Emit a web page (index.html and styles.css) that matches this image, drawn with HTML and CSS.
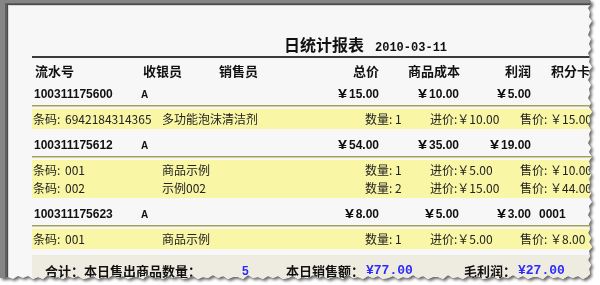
FILE: index.html
```html
<!DOCTYPE html>
<html lang="zh-CN">
<head>
<meta charset="utf-8">
<title>日统计报表</title>
<link rel="stylesheet" href="styles.css">
</head>
<body>
<div class="shot">
  <div class="paper">
    <div class="report">
      <div class="title"><span class="t-cn">日统计报表</span><span class="t-date">2010-03-11</span></div>
      <div class="rule"></div>

      <div class="row head">
        <span class="c1">流水号</span><span class="c2">收银员</span><span class="c3">销售员</span><span class="c4">总价</span><span class="c5">商品成本</span><span class="c6">利润</span><span class="c7">积分卡</span>
      </div>

      <div class="row main">
        <span class="c1">100311175600</span><span class="c2"><span class="who">A</span></span><span class="c3"></span><span class="c4"><span class="yen">¥</span>15.00</span><span class="c5"><span class="yen">¥</span>10.00</span><span class="c6"><span class="yen">¥</span>5.00</span><span class="c7"></span>
      </div>
      <div class="sep"></div>
      <div class="band">
        <div class="bl"><span><span class="lbl">条码:</span>6942184314365</span><span>多功能泡沫清洁剂</span><span>数量: 1</span><span>进价:￥10.00</span><span>售价: ￥15.00</span></div>
      </div>

      <div class="row main gap">
        <span class="c1">100311175612</span><span class="c2"><span class="who">A</span></span><span class="c3"></span><span class="c4"><span class="yen">¥</span>54.00</span><span class="c5"><span class="yen">¥</span>35.00</span><span class="c6"><span class="yen">¥</span>19.00</span><span class="c7"></span>
      </div>
      <div class="sep"></div>
      <div class="band">
        <div class="bl"><span><span class="lbl">条码:</span>001</span><span>商品示例</span><span>数量: 1</span><span>进价:￥5.00</span><span>售价: ￥10.00</span></div>
        <div class="bl"><span><span class="lbl">条码:</span>002</span><span>示例002</span><span>数量: 2</span><span>进价:￥15.00</span><span>售价: ￥44.00</span></div>
      </div>

      <div class="row main gap">
        <span class="c1">100311175623</span><span class="c2"><span class="who">A</span></span><span class="c3"></span><span class="c4"><span class="yen">¥</span>8.00</span><span class="c5"><span class="yen">¥</span>5.00</span><span class="c6"><span class="yen">¥</span>3.00</span><span class="c7">0001</span>
      </div>
      <div class="sep"></div>
      <div class="band">
        <div class="bl"><span><span class="lbl">条码:</span>001</span><span>商品示例</span><span>数量: 1</span><span>进价:￥5.00</span><span>售价: ￥8.00</span></div>
      </div>

      <div class="footer">
        <span class="f1">合计：本日售出商品数量：</span><span class="num">5</span><span>本日销售额：</span><span class="blue">¥77.00</span><span>毛利润：</span><span class="blue">¥27.00</span>
      </div>
    </div>
  </div>
</div>
</body>
</html>
```

FILE: styles.css
```css
html, body {
  margin: 0;
  padding: 0;
  background: #ffffff;
}

body {
  width: 600px;
  height: 285px;
  overflow: hidden;
}

.shot {
  width: 600px;
  height: 285px;
  filter: drop-shadow(2px 2px 1.5px rgba(0, 0, 0, 0.6));
}

.paper {
  width: 600px;
  height: 285px;
  box-sizing: border-box;
  overflow: hidden;
  background: #f7f7f7;
  padding: 34px 0 0 32px;
  box-shadow:
    inset 5px 3px 0 #858585,
    inset 7px 4px 0 #606060,
    inset 8px 5px 0 #4a4a4a,
    inset 9px 6px 0 #d8d8d8;
  clip-path: polygon(
    0 0, 590px 0, 591px 4px, 588px 8px, 590px 12px, 589px 17px, 592px 21px, 589px 26px, 590px 30px, 588px 35px,
    591px 39px, 589px 44px, 591px 49px, 588px 53px, 590px 58px, 589px 62px, 592px 67px, 589px 71px, 590px 76px,
    588px 80px, 591px 85px, 589px 89px, 590px 94px, 588px 98px, 591px 103px, 589px 107px, 592px 112px, 589px 116px,
    590px 121px, 588px 125px, 591px 130px, 589px 134px, 590px 139px, 588px 143px, 591px 148px, 589px 152px,
    592px 157px, 589px 161px, 590px 166px, 588px 170px, 591px 175px, 589px 179px, 590px 184px, 588px 188px,
    591px 193px, 589px 197px, 592px 202px, 589px 206px, 590px 211px, 588px 215px, 591px 220px, 589px 224px,
    590px 229px, 588px 233px, 591px 238px, 589px 242px, 592px 247px, 589px 251px, 590px 256px, 588px 260px,
    591px 265px, 589px 269px, 590px 274px, 587px 277px,
    583px 279px, 578px 276px, 573px 278px, 568px 276px, 563px 279px, 558px 277px, 553px 278px, 548px 275px, 543px 279px, 538px 277px,
    533px 277px, 528px 279px, 523px 276px, 518px 278px, 513px 275px, 508px 278px, 503px 277px, 498px 279px, 493px 276px, 488px 278px,
    483px 279px, 478px 276px, 473px 278px, 468px 276px, 463px 279px, 458px 277px, 453px 278px, 448px 275px, 443px 279px, 438px 277px,
    433px 277px, 428px 279px, 423px 276px, 418px 278px, 413px 275px, 408px 278px, 403px 277px, 398px 279px, 393px 276px, 388px 278px,
    383px 279px, 378px 276px, 373px 278px, 368px 276px, 363px 279px, 358px 277px, 353px 278px, 348px 275px, 343px 279px, 338px 277px,
    333px 277px, 328px 279px, 323px 276px, 318px 278px, 313px 275px, 308px 278px, 303px 277px, 298px 279px, 293px 276px, 288px 278px,
    283px 279px, 278px 276px, 273px 278px, 268px 276px, 263px 279px, 258px 277px, 253px 278px, 248px 275px, 243px 279px, 238px 277px,
    233px 277px, 228px 279px, 223px 276px, 218px 278px, 213px 275px, 208px 278px, 203px 277px, 198px 279px, 193px 276px, 188px 278px,
    183px 279px, 178px 276px, 173px 278px, 168px 276px, 163px 279px, 158px 277px, 153px 278px, 148px 275px, 143px 279px, 138px 277px,
    133px 277px, 128px 279px, 123px 276px, 118px 278px, 113px 275px, 108px 278px, 103px 277px, 98px 279px, 93px 276px, 88px 278px,
    83px 279px, 78px 276px, 73px 278px, 68px 276px, 63px 279px, 58px 277px, 53px 278px, 48px 275px, 43px 279px, 38px 277px,
    33px 279px, 28px 276px, 23px 278px, 18px 276px, 13px 279px, 8px 277px, 3px 278px, 0 278px
  );
}

.report {
  width: 620px;
  color: #111111;
}

/* title */
.title {
  display: flex;
  align-items: baseline;
  padding-left: 252px;
  height: 21px;
}

.t-cn {
  font: bold 16px/21px "Noto Sans CJK SC", sans-serif;
  color: #111111;
}

.t-date {
  font: bold 12px/21px "Liberation Mono", monospace;
  margin-left: 11px;
  color: #111111;
}

.rule {
  height: 2px;
  margin-top: 1px;
  background: #3a3a3a;
}

/* rows */
.row {
  display: grid;
  grid-template-columns: 108px 77px 83px 80px 80px 72px 1fr;
  white-space: nowrap;
}

.head {
  height: 25px;
  font: bold 13px/25px "Noto Sans CJK SC", sans-serif;
}

.main {
  height: 22px;
  font: bold 12px/22px "Liberation Sans", sans-serif;
}

.main.gap {
  margin-top: 5px;
}

.c4, .c5, .c6 {
  text-align: right;
}

.head .c1 { padding-left: 3px; }
.head .c2 { padding-left: 3px; }
.head .c3 { padding-left: 2px; }
.head .c4 { padding-right: 1px; }
.head .c6 { padding-right: 1px; }
.head .c7 { padding-left: 19px; }

.main .c1 { padding-left: 2px; }
.main .c2 { padding-left: 1px; }
.main .c4 { padding-right: 1px; }
.main .c5 { padding-right: 1px; }
.main .c6 { padding-right: 1px; }
.main .c7 { padding-left: 7px; }

.yen {
  display: inline-block;
  width: 13px;
  text-align: center;
  transform: scaleX(1.35);
}

.who {
  font-size: 10px;
}

.sep {
  border-top: 1px solid #a39f60;
  border-bottom: 1px solid #d3cf9c;
}

/* detail bands */
.band {
  margin-top: 2px;
  padding: 1px 0;
  background: #f9f7a6;
  font: 12px/18px "Noto Sans CJK SC", sans-serif;
  color: #222222;
}

.bl {
  display: grid;
  grid-template-columns: 130px 203px 65px 90px 1fr;
  height: 18px;
  white-space: nowrap;
}

.lbl {
  display: inline-block;
  width: 32px;
  padding-left: 1px;
}

/* footer */
.footer {
  margin-top: 6px;
  height: 40px;
  padding-top: 8px;
  box-sizing: border-box;
  background: #eeebe0;
  display: grid;
  grid-template-columns: 210px 44px 80px 98px 54px 1fr;
  font: bold 13px/16px "Noto Sans CJK SC", sans-serif;
  white-space: nowrap;
}

.f1 {
  padding-left: 13px;
}

.num {
  color: #2a2aff;
  font: bold 12px/16px "Liberation Sans", sans-serif;
}

.blue {
  color: #2a2aff;
  font: bold 13px/16px "Liberation Mono", monospace;
}
```
